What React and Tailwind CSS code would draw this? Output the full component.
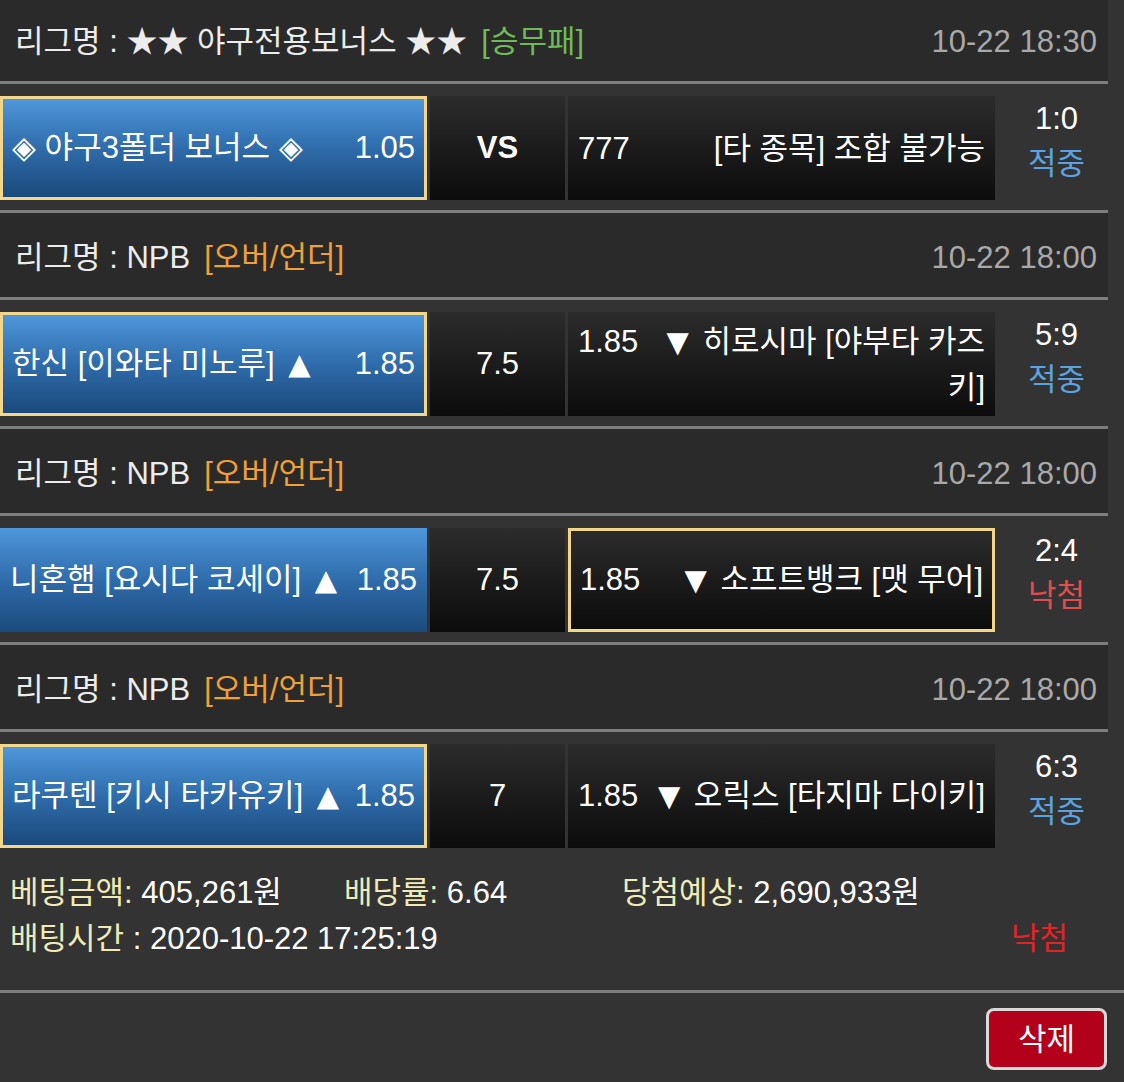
import React from "react";

const matches = [
  {
    league: "★★ 야구전용보너스 ★★",
    type: "[승무패]",
    typeColor: "text-[#6dbb56]",
    date: "10-22 18:30",
    homeSel: true,
    home: "◈ 야구3폴더 보너스 ◈",
    homeOdds: "1.05",
    mid: "VS",
    midBold: true,
    awayOdds: "777",
    away: "[타 종목] 조합 불가능",
    awaySel: false,
    score: "1:0",
    result: "적중",
  },
  {
    league: "NPB",
    type: "[오버/언더]",
    typeColor: "text-[#f0a035]",
    date: "10-22 18:00",
    homeSel: true,
    home: "한신 [이와타 미노루] ▲",
    homeOdds: "1.85",
    mid: "7.5",
    midBold: false,
    awayOdds: "1.85",
    away: "▼ 히로시마 [야부타 카즈키]",
    awaySel: false,
    score: "5:9",
    result: "적중",
  },
  {
    league: "NPB",
    type: "[오버/언더]",
    typeColor: "text-[#f0a035]",
    date: "10-22 18:00",
    homeSel: false,
    home: "니혼햄 [요시다 코세이] ▲",
    homeOdds: "1.85",
    mid: "7.5",
    midBold: false,
    awayOdds: "1.85",
    away: "▼ 소프트뱅크 [맷 무어]",
    awaySel: true,
    score: "2:4",
    result: "낙첨",
  },
  {
    league: "NPB",
    type: "[오버/언더]",
    typeColor: "text-[#f0a035]",
    date: "10-22 18:00",
    homeSel: true,
    home: "라쿠텐 [키시 타카유키] ▲",
    homeOdds: "1.85",
    mid: "7",
    midBold: false,
    awayOdds: "1.85",
    away: "▼ 오릭스 [타지마 다이키]",
    awaySel: false,
    score: "6:3",
    result: "적중",
  },
];

function Tri({ text }) {
  const parts = text.split(/([▲▼])/);
  return parts.map((p, i) =>
    p === "▲" || p === "▼" ? (
      <span key={i} className="font-['DejaVu_Sans'] text-[29px] mx-[5px]">
        {p}
      </span>
    ) : (
      <React.Fragment key={i}>{p}</React.Fragment>
    )
  );
}

function Line({ full }) {
  return <div className={(full ? "w-full" : "w-[1108px]") + " h-[3px] bg-[#7d7d7d]"} />;
}

function MatchBlock({ m }) {
  return (
    <>
      <div className="w-[1108px] h-[84px] bg-[#2a2a2a] flex items-center justify-between pt-[6px] pl-[15px] pr-[11px]">
        <div className="flex items-center">
          <span className="text-[#ececec]">리그명 : {m.league}</span>
          <span className={"ml-[14px] " + m.typeColor}>{m.type}</span>
        </div>
        <span className="text-[#a9a9a9]">{m.date}</span>
      </div>
      <Line />
      <div className="w-[1108px] flex pt-3 pb-[10px]">
        <div
          className={
            "w-[427px] h-[104px] flex items-center justify-between bg-linear-to-b from-[#4e97db] via-[#2f6cab] to-[#1b4a7c] text-white " +
            (m.homeSel ? "border-[3px] border-[#f3d689] px-[9px]" : "px-[10px]")
          }
        >
          <span className="whitespace-nowrap">
            <Tri text={m.home} />
          </span>
          <span className="whitespace-nowrap">{m.homeOdds}</span>
        </div>
        <div
          className={
            "ml-[3px] w-[135px] h-[104px] flex items-center justify-center bg-linear-to-b from-[#2c2c2c] to-[#0c0c0c] text-white " +
            (m.midBold ? "font-bold" : "")
          }
        >
          {m.mid}
        </div>
        <div
          className={
            "ml-[3px] w-[427px] h-[104px] flex items-center bg-linear-to-b from-[#2c2c2c] to-[#0c0c0c] text-white " +
            (m.awaySel ? "border-[3px] border-[#f3d689] px-[9px]" : "px-[10px]")
          }
        >
          <div className="w-full text-right leading-[45px]">
            <span className="float-left">{m.awayOdds}</span>
            <Tri text={m.away} />
          </div>
        </div>
        <div className="w-[113px] pl-[10px] text-center leading-[45px]">
          <div className="text-white">{m.score}</div>
          <div className={m.result === "적중" ? "text-[#5aa3e2]" : "text-[#e34c4c]"}>{m.result}</div>
        </div>
      </div>
    </>
  );
}

export default function App() {
  return (
    <div
      className="w-[1124px] h-[1082px] overflow-hidden bg-[#333333] text-[31px] leading-[46px]"
      style={{ fontFamily: "'Liberation Sans', 'Noto Sans CJK KR', sans-serif" }}
    >
      <div className="-mt-[3px]">
        {matches.map((m, i) => (
          <React.Fragment key={i}>
            {i > 0 && <Line />}
            <MatchBlock m={m} />
          </React.Fragment>
        ))}
      </div>
      <div className="pl-[10px] pt-[12px] pb-[28px]">
        <div className="flex">
          <div className="w-[334px]">
            <span className="text-[#f0ebb6]">베팅금액:</span>
            <span className="text-white"> 405,261원</span>
          </div>
          <div className="w-[278px]">
            <span className="text-[#f0ebb6]">배당률:</span>
            <span className="text-white"> 6.64</span>
          </div>
          <div>
            <span className="text-[#f0ebb6]">당첨예상:</span>
            <span className="text-white"> 2,690,933원</span>
          </div>
        </div>
        <div className="flex justify-between pr-[56px]">
          <div>
            <span className="text-[#f0ebb6]">배팅시간</span>
            <span className="text-white"> : 2020-10-22 17:25:19</span>
          </div>
          <span className="text-[#e32424]">낙첨</span>
        </div>
      </div>
      <Line full />
      <div className="flex justify-end pr-[17px] pt-[15px]">
        <button className="w-[121px] h-[62px] rounded-[8px] border-[3px] border-[#d9d9d9] bg-[#b3001b] text-white text-[31px] leading-none">
          삭제
        </button>
      </div>
    </div>
  );
}
